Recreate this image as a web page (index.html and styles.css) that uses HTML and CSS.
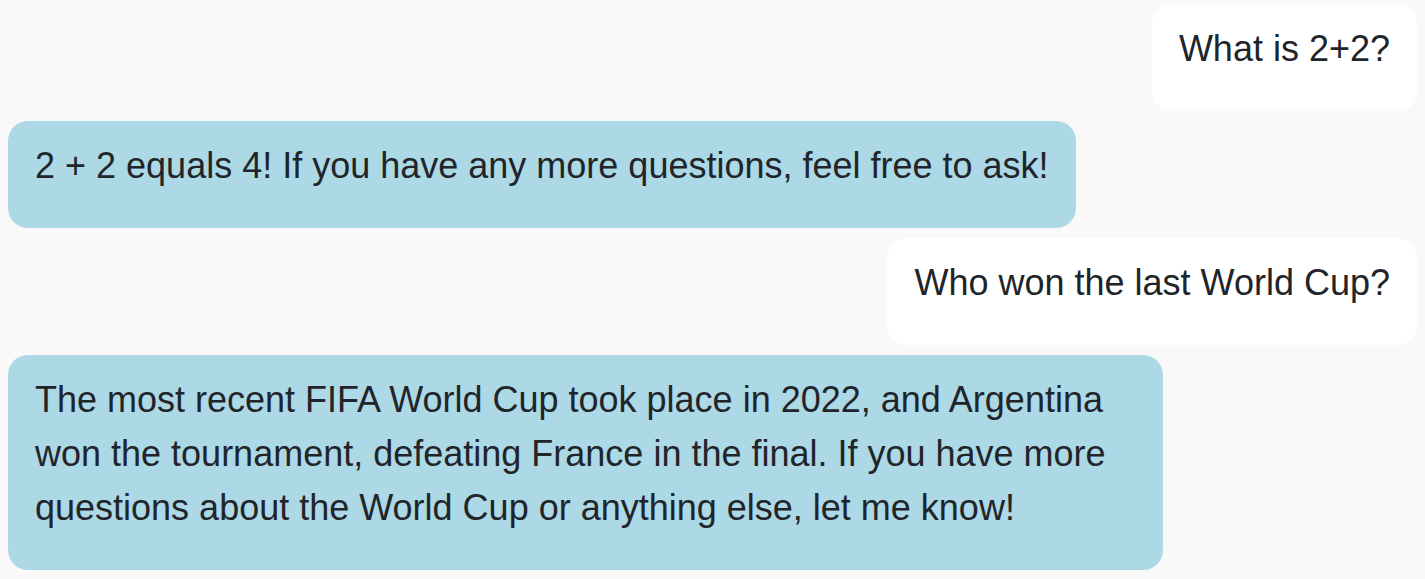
FILE: index.html
```html
<!DOCTYPE html>
<html lang="en">
<head>
<meta charset="utf-8">
<title>Chat</title>
<link rel="stylesheet" href="styles.css">
</head>
<body>
<div class="chat">
  <div class="msg user">What is 2+2?</div>
  <div class="msg bot">2 + 2 equals 4! If you have any more questions, feel free to ask!</div>
  <div class="msg user">Who won the last World Cup?</div>
  <div class="msg bot">The most recent FIFA World Cup took place in 2022, and Argentina won the tournament, defeating France in the final. If you have more questions about the World Cup or anything else, let me know!</div>
</div>
</body>
</html>
```

FILE: styles.css
```css
html, body {
  margin: 0;
  padding: 0;
  background: #f9f9f9;
}

body {
  font-family: "Liberation Sans", Arial, sans-serif;
  color: #212529;
}

.chat {
  display: flex;
  flex-direction: column;
  align-items: flex-start;
  gap: 10px;
  padding: 4px 8px;
}

.msg {
  box-sizing: border-box;
  max-width: 82%;
  padding: 18px 27px 35px;
  font-size: 36px;
  line-height: 54px;
  border-radius: 20px;
}

.user {
  align-self: flex-end;
  background: #ffffff;
}

.bot {
  background: #add8e6;
}
```
